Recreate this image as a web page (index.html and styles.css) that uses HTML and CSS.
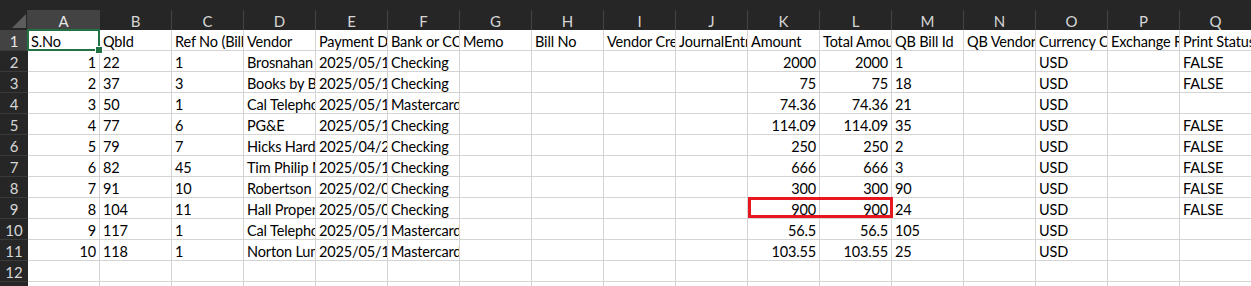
FILE: index.html
```html
<!DOCTYPE html>
<html>
<head>
<meta charset="utf-8">
<link rel="stylesheet" href="styles.css">
</head>
<body>
<div class="wrap">
  <div class="topstrip"></div>
  <div class="sheet">
    <div class="corner"><svg width="28" height="20" viewBox="0 0 28 20"><polygon points="26,4 26,18 12,18" fill="#5c5c5c"/></svg></div>
    <div class="ch sel">A</div><div class="ch">B</div><div class="ch">C</div><div class="ch">D</div><div class="ch">E</div><div class="ch">F</div><div class="ch">G</div><div class="ch">H</div><div class="ch">I</div><div class="ch">J</div><div class="ch">K</div><div class="ch">L</div><div class="ch">M</div><div class="ch">N</div><div class="ch">O</div><div class="ch">P</div><div class="ch">Q</div>

    <div class="rh sel">1</div>
    <div class="c active">S.No</div><div class="c">QbId</div><div class="c">Ref No (Bill No)</div><div class="c">Vendor</div><div class="c">Payment Date</div><div class="c">Bank or CC Account</div><div class="c">Memo</div><div class="c">Bill No</div><div class="c">Vendor Credit</div><div class="c">JournalEntry</div><div class="c">Amount</div><div class="c">Total Amount</div><div class="c">QB Bill Id</div><div class="c">QB Vendor Id</div><div class="c">Currency Code</div><div class="c">Exchange Rate</div><div class="c">Print Status</div>

    <div class="rh">2</div>
    <div class="c n">1</div><div class="c">22</div><div class="c">1</div><div class="c">Brosnahan Insurance Agency</div><div class="c">2025/05/15</div><div class="c">Checking</div><div class="c"></div><div class="c"></div><div class="c"></div><div class="c"></div><div class="c n">2000</div><div class="c n">2000</div><div class="c">1</div><div class="c"></div><div class="c">USD</div><div class="c"></div><div class="c">FALSE</div>

    <div class="rh">3</div>
    <div class="c n">2</div><div class="c">37</div><div class="c">3</div><div class="c">Books by Bessie</div><div class="c">2025/05/15</div><div class="c">Checking</div><div class="c"></div><div class="c"></div><div class="c"></div><div class="c"></div><div class="c n">75</div><div class="c n">75</div><div class="c">18</div><div class="c"></div><div class="c">USD</div><div class="c"></div><div class="c">FALSE</div>

    <div class="rh">4</div>
    <div class="c n">3</div><div class="c">50</div><div class="c">1</div><div class="c">Cal Telephone</div><div class="c">2025/05/15</div><div class="c">Mastercard</div><div class="c"></div><div class="c"></div><div class="c"></div><div class="c"></div><div class="c n">74.36</div><div class="c n">74.36</div><div class="c">21</div><div class="c"></div><div class="c">USD</div><div class="c"></div><div class="c"></div>

    <div class="rh">5</div>
    <div class="c n">4</div><div class="c">77</div><div class="c">6</div><div class="c">PG&amp;E</div><div class="c">2025/05/15</div><div class="c">Checking</div><div class="c"></div><div class="c"></div><div class="c"></div><div class="c"></div><div class="c n">114.09</div><div class="c n">114.09</div><div class="c">35</div><div class="c"></div><div class="c">USD</div><div class="c"></div><div class="c">FALSE</div>

    <div class="rh">6</div>
    <div class="c n">5</div><div class="c">79</div><div class="c">7</div><div class="c">Hicks Hardware</div><div class="c">2025/04/28</div><div class="c">Checking</div><div class="c"></div><div class="c"></div><div class="c"></div><div class="c"></div><div class="c n">250</div><div class="c n">250</div><div class="c">2</div><div class="c"></div><div class="c">USD</div><div class="c"></div><div class="c">FALSE</div>

    <div class="rh">7</div>
    <div class="c n">6</div><div class="c">82</div><div class="c">45</div><div class="c">Tim Philip Masonry</div><div class="c">2025/05/15</div><div class="c">Checking</div><div class="c"></div><div class="c"></div><div class="c"></div><div class="c"></div><div class="c n">666</div><div class="c n">666</div><div class="c">3</div><div class="c"></div><div class="c">USD</div><div class="c"></div><div class="c">FALSE</div>

    <div class="rh">8</div>
    <div class="c n">7</div><div class="c">91</div><div class="c">10</div><div class="c">Robertson &amp; Associates</div><div class="c">2025/02/05</div><div class="c">Checking</div><div class="c"></div><div class="c"></div><div class="c"></div><div class="c"></div><div class="c n">300</div><div class="c n">300</div><div class="c">90</div><div class="c"></div><div class="c">USD</div><div class="c"></div><div class="c">FALSE</div>

    <div class="rh">9</div>
    <div class="c n">8</div><div class="c">104</div><div class="c">11</div><div class="c">Hall Properties</div><div class="c">2025/05/05</div><div class="c">Checking</div><div class="c"></div><div class="c"></div><div class="c"></div><div class="c"></div><div class="c n">900</div><div class="c n">900</div><div class="c">24</div><div class="c"></div><div class="c">USD</div><div class="c"></div><div class="c">FALSE</div>

    <div class="rh">10</div>
    <div class="c n">9</div><div class="c">117</div><div class="c">1</div><div class="c">Cal Telephone</div><div class="c">2025/05/15</div><div class="c">Mastercard</div><div class="c"></div><div class="c"></div><div class="c"></div><div class="c"></div><div class="c n">56.5</div><div class="c n">56.5</div><div class="c">105</div><div class="c"></div><div class="c">USD</div><div class="c"></div><div class="c"></div>

    <div class="rh">11</div>
    <div class="c n">10</div><div class="c">118</div><div class="c">1</div><div class="c">Norton Lumber and Building Materials</div><div class="c">2025/05/15</div><div class="c">Mastercard</div><div class="c"></div><div class="c"></div><div class="c"></div><div class="c"></div><div class="c n">103.55</div><div class="c n">103.55</div><div class="c">25</div><div class="c"></div><div class="c">USD</div><div class="c"></div><div class="c"></div>

    <div class="rh">12</div>
    <div class="c"></div><div class="c"></div><div class="c"></div><div class="c"></div><div class="c"></div><div class="c"></div><div class="c"></div><div class="c"></div><div class="c"></div><div class="c"></div><div class="c"></div><div class="c"></div><div class="c"></div><div class="c"></div><div class="c"></div><div class="c"></div><div class="c"></div>

    <div class="rh"></div>
    <div class="c"></div><div class="c"></div><div class="c"></div><div class="c"></div><div class="c"></div><div class="c"></div><div class="c"></div><div class="c"></div><div class="c"></div><div class="c"></div><div class="c"></div><div class="c"></div><div class="c"></div><div class="c"></div><div class="c"></div><div class="c"></div><div class="c"></div>
  </div>
  <div class="highlight"></div>
</div>
</body>
</html>
```

FILE: styles.css
```css
html, body {
  margin: 0;
  padding: 0;
  background: #ffffff;
  overflow: hidden;
}
.wrap {
  position: relative;
  width: 1251px;
  height: 286px;
  overflow: hidden;
  font-family: Lato, "Liberation Sans", sans-serif;
  font-size: 14.5px;
}
.topstrip {
  height: 10px;
  background: #262626;
}
.sheet {
  display: grid;
  grid-template-columns: 28px repeat(17, 72px);
  grid-template-rows: 20px repeat(13, 21px);
}
.corner {
  background: #262626;
  border-right: 1px solid #3f3f3f;
  box-sizing: border-box;
  line-height: 0;
}
.ch {
  background: #262626;
  color: #d6d6d6;
  text-align: center;
  line-height: 20px;
  padding-top: 1px;
  border-right: 1px solid #434343;
  box-sizing: border-box;
  font-size: 15px;
  overflow: hidden;
}
.ch.sel, .rh.sel {
  background: #434343;
  color: #e8e8e8;
}
.rh {
  background: #262626;
  color: #d6d6d6;
  text-align: center;
  line-height: 20px;
  padding-top: 1px;
  border-bottom: 1px solid #3a3a3a;
  box-sizing: border-box;
  font-size: 15px;
  overflow: hidden;
}
.c {
  border-right: 1px solid #d4d4d4;
  border-bottom: 1px solid #d4d4d4;
  box-sizing: border-box;
  padding: 2px 1px 0 3px;
  line-height: 20px;
  letter-spacing: -0.15px;
  color: #000000;
  white-space: nowrap;
  overflow: hidden;
}
.c.n {
  text-align: right;
  padding: 2px 3px 0 2px;
}
.c.active {
  position: relative;
  overflow: visible;
  box-shadow: inset 0 0 0 2px #217346;
  margin: -1px 0 0 -1px;
  width: 73px;
  height: 22px;
  padding: 3px 2px 0 4px;
  border: none;
}
.c.active::after {
  content: "";
  position: absolute;
  right: -3px;
  bottom: -3px;
  width: 6px;
  height: 6px;
  background: #217346;
  border: 1px solid #ffffff;
}
.highlight {
  position: absolute;
  left: 748px;
  top: 197px;
  width: 145px;
  height: 21px;
  box-sizing: border-box;
  border: 3px solid #e8161f;
}
```
